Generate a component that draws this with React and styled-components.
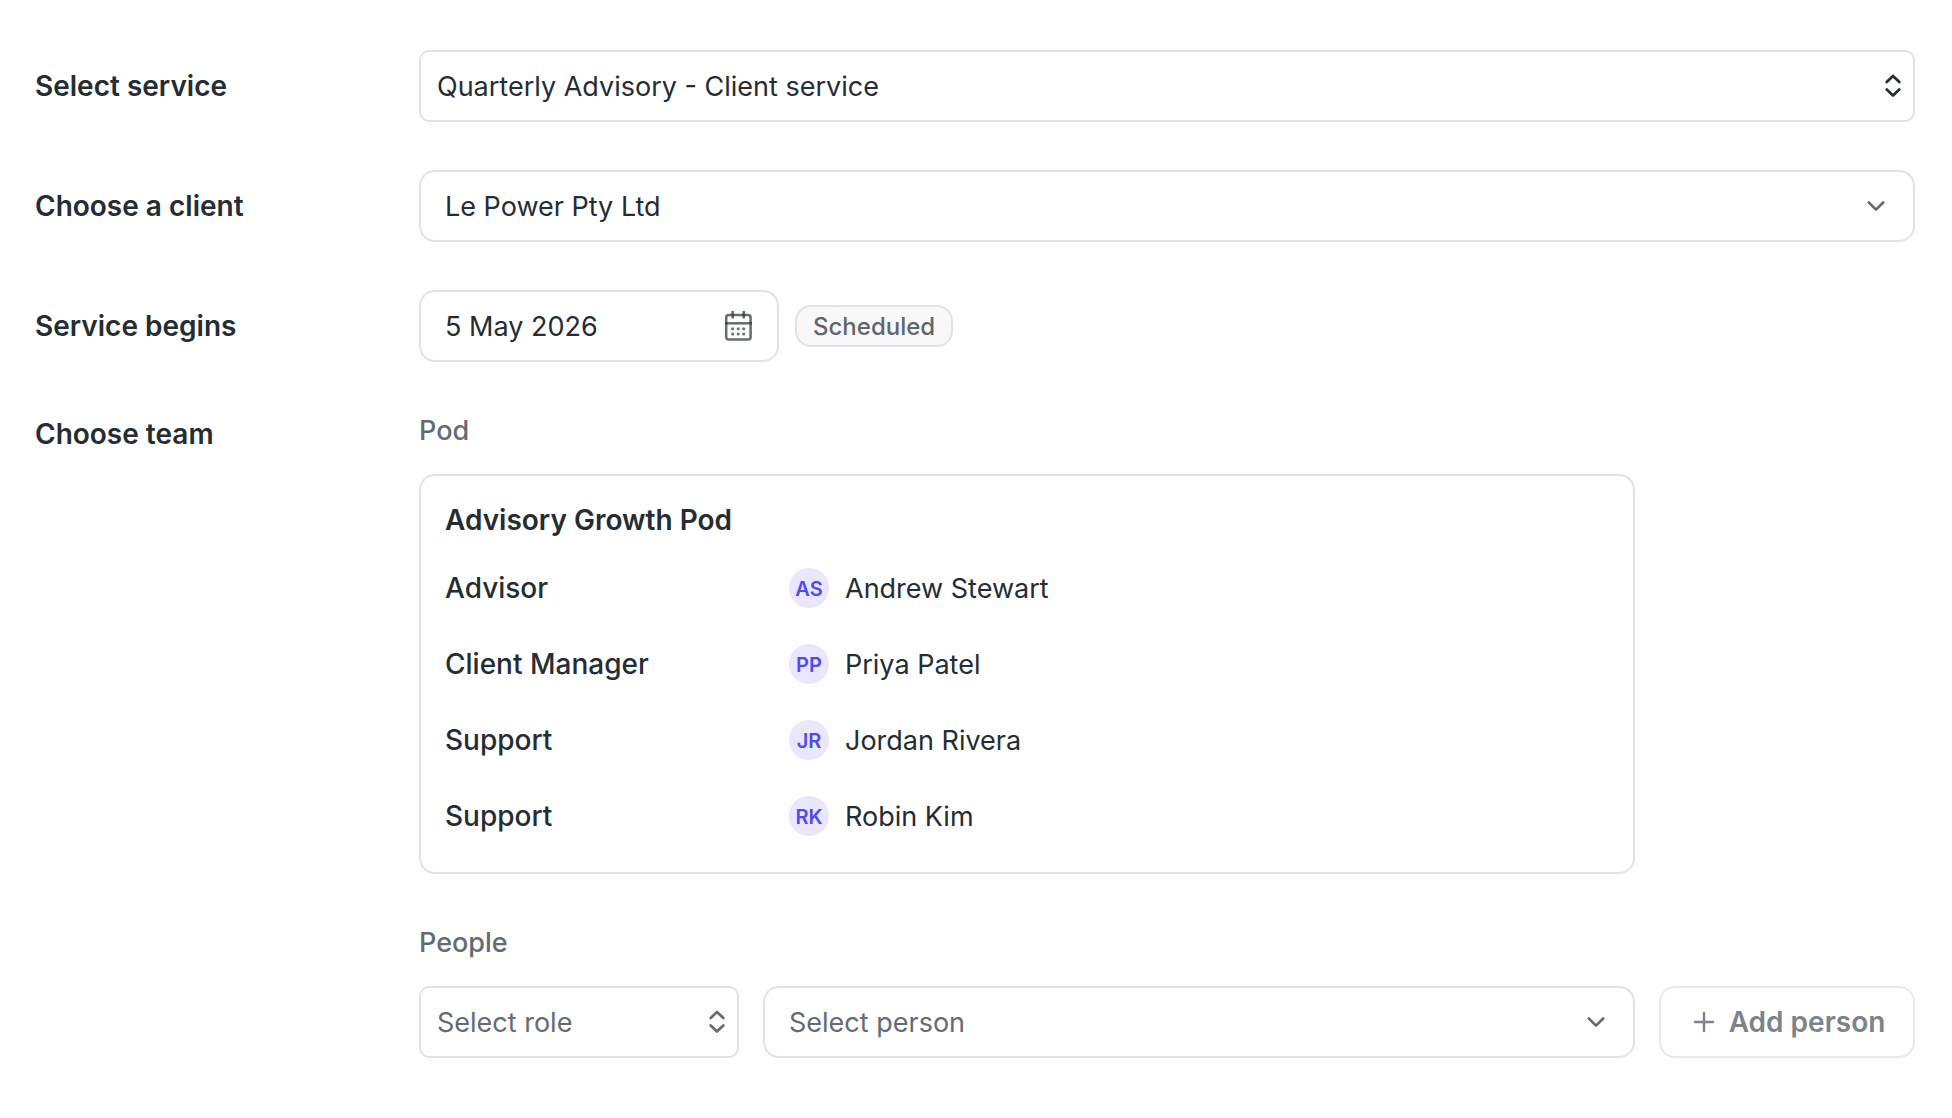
import React, { useState } from 'react'
import styled, { createGlobalStyle } from 'styled-components'

const GlobalStyle = createGlobalStyle`
  *, *::before, *::after {
    box-sizing: border-box;
  }

  body {
    margin: 0;
    background: #fefefe;
    color: #252d33;
    font-family: Inter, 'Liberation Sans', sans-serif;
    font-size: 27px;
    line-height: 36px;
  }

  button, input, select {
    font: inherit;
    color: inherit;
  }
`;

const Form = styled.form`
  display: flex;
  flex-direction: column;
  gap: 48px;
  padding: 50px 37px 60px 35px;
`;

const Row = styled.div`
  display: grid;
  grid-template-columns: 384px minmax(0, 1fr);
  align-items: ${({ $top }) => ($top ? 'start' : 'center')};
`;

const Label = styled.label`
  font-size: 28px;
  font-weight: 600;
`;

const TeamLabel = styled.h2`
  margin: 0;
  padding-top: 6px;
  font-size: 28px;
  font-weight: 600;
`;

const Field = styled.div`
  display: grid;
  align-items: center;
  min-width: 0;
  color: ${({ $muted }) => ($muted ? '#646b71' : '#252d33')};

  > * {
    grid-area: 1 / 1;
  }

  > svg {
    justify-self: end;
    margin-right: ${({ $round }) => ($round ? '27px' : '10px')};
    pointer-events: none;
  }
`;

const Select = styled.select`
  appearance: none;
  width: 100%;
  height: 72px;
  padding: 2px 56px 0 ${({ $round }) => ($round ? '24px' : '16px')};
  background: transparent;
  border: 2px solid #dfe3e8;
  border-radius: ${({ $round }) => ($round ? '16px' : '10px')};
  cursor: pointer;
`;

const DateLine = styled.div`
  display: flex;
  align-items: center;
  gap: 16px;
`;

const DateBox = styled.div`
  display: flex;
  align-items: center;
  width: 360px;
  height: 72px;
  padding: 0 24px;
  border: 2px solid #dfe3e8;
  border-radius: 16px;
`;

const DateInput = styled.input`
  flex: 1;
  min-width: 0;
  padding: 2px 0 0;
  border: none;
  outline: none;
  background: transparent;
`;

const IconButton = styled.button`
  display: flex;
  padding: 0;
  border: none;
  background: transparent;
  cursor: pointer;
`;

const Badge = styled.span`
  padding: 4px 16px 2px;
  background: #f8f8fb;
  border: 2px solid #dfe3e8;
  border-radius: 16px;
  color: #5f666c;
  font-size: 24px;
  font-weight: 500;
  line-height: 32px;
`;

const Team = styled.div`
  display: grid;
  grid-template-columns: 320px minmax(0, 1fr) 256px;
  column-gap: 24px;
`;

const GroupTitle = styled.h3`
  grid-column: 1 / -1;
  margin: 0;
  padding: ${({ $spaced }) => ($spaced ? '51px 0 25px' : '3px 0 25px')};
  color: #646b71;
  font-size: inherit;
  font-weight: 500;
`;

const PodCard = styled.section`
  grid-column: 1 / 3;
  padding: 26px 24px 36px;
  border: 2px solid #dfe3e8;
  border-radius: 16px;
`;

const PodName = styled.h4`
  margin: 0 0 30px;
  font-size: 28px;
  font-weight: 600;
`;

const Members = styled.dl`
  display: flex;
  flex-direction: column;
  gap: 36px;
  margin: 0;
`;

const Member = styled.div`
  display: grid;
  grid-template-columns: 344px 1fr;
  align-items: center;
`;

const Role = styled.dt`
  font-size: 28px;
  font-weight: 500;
`;

const Person = styled.dd`
  display: flex;
  align-items: center;
  gap: 16px;
  margin: 0;
`;

const Name = styled.span`
  padding-top: 2px;
`;

const Avatar = styled.span`
  display: flex;
  align-items: center;
  justify-content: center;
  width: 40px;
  height: 40px;
  padding-top: 2px;
  border-radius: 50%;
  background: #e9e7fe;
  color: #5149f6;
  font-size: 20px;
  font-weight: 600;
`;

const AddButton = styled.button`
  display: flex;
  align-items: center;
  justify-content: center;
  gap: 12px;
  height: 72px;
  padding: 0;
  background: transparent;
  border: 2px solid #e7e9ed;
  border-radius: 16px;
  color: #7d8388;
  font-size: 28px;
  font-weight: 600;
  white-space: nowrap;
`;

const UpDownIcon = () => (
  <svg width="24" height="28" viewBox="0 0 24 28" fill="none" stroke="currentColor" strokeWidth="2.7" strokeLinecap="round" strokeLinejoin="round" aria-hidden="true">
    <path d="M5.7 10 12 4l6.3 6M5.7 17.5 12 23.5l6.3-6" />
  </svg>
);

const ChevronIcon = () => (
  <svg width="24" height="24" viewBox="0 0 24 24" fill="none" stroke="#646b71" strokeWidth="2.6" strokeLinecap="round" strokeLinejoin="round" aria-hidden="true">
    <path d="m4.8 8.5 7.2 7.2 7.2-7.2" />
  </svg>
);

const CalendarIcon = () => (
  <svg width="30" height="32" viewBox="0 0 30 32" fill="none" stroke="#252d33" strokeOpacity="0.7" strokeWidth="2.5" aria-hidden="true">
    <rect x="3.2" y="5" width="24.4" height="24.5" rx="2.5" />
    <path d="M2 13.3h26.8" />
    <path d="M9.7 1v7.5M20.7 1v7.5" />
    <path d="M9.7 18.7h.01M15.2 18.7h.01M20.7 18.7h.01M9.7 24h.01M15.2 24h.01M20.7 24h.01" strokeWidth="3" strokeLinecap="round" />
  </svg>
);

const PlusIcon = () => (
  <svg width="28" height="28" viewBox="0 0 28 28" fill="none" stroke="currentColor" strokeWidth="2.4" strokeLinecap="round" aria-hidden="true">
    <path d="M15 5v18M6 14h18" />
  </svg>
);

const members = [
  { role: 'Advisor', initials: 'AS', name: 'Andrew Stewart' },
  { role: 'Client Manager', initials: 'PP', name: 'Priya Patel' },
  { role: 'Support', initials: 'JR', name: 'Jordan Rivera' },
  { role: 'Support', initials: 'RK', name: 'Robin Kim' },
];

const App = () => {
  const [date, setDate] = useState('5 May 2026');

  return (
    <>
      <GlobalStyle />
      <Form onSubmit={(e) => e.preventDefault()}>
        <Row>
          <Label htmlFor="service">Select service</Label>
          <Field>
            <Select id="service">
              <option>Quarterly Advisory - Client service</option>
            </Select>
            <UpDownIcon />
          </Field>
        </Row>

        <Row>
          <Label htmlFor="client">Choose a client</Label>
          <Field $round>
            <Select id="client" $round>
              <option>Le Power Pty Ltd</option>
            </Select>
            <ChevronIcon />
          </Field>
        </Row>

        <Row>
          <Label htmlFor="begins">Service begins</Label>
          <DateLine>
            <DateBox>
              <DateInput id="begins" type="text" value={date} onChange={(e) => setDate(e.target.value)} />
              <IconButton type="button" aria-label="Open calendar">
                <CalendarIcon />
              </IconButton>
            </DateBox>
            <Badge>Scheduled</Badge>
          </DateLine>
        </Row>

        <Row $top>
          <TeamLabel>Choose team</TeamLabel>
          <Team>
            <GroupTitle>Pod</GroupTitle>
            <PodCard>
              <PodName>Advisory Growth Pod</PodName>
              <Members>
                {members.map((member) => (
                  <Member key={member.initials}>
                    <Role>{member.role}</Role>
                    <Person>
                      <Avatar>{member.initials}</Avatar>
                      <Name>{member.name}</Name>
                    </Person>
                  </Member>
                ))}
              </Members>
            </PodCard>

            <GroupTitle $spaced>People</GroupTitle>
            <Field $muted>
              <Select aria-label="Role">
                <option>Select role</option>
              </Select>
              <UpDownIcon />
            </Field>
            <Field $muted $round>
              <Select aria-label="Person" $round>
                <option>Select person</option>
              </Select>
              <ChevronIcon />
            </Field>
            <AddButton type="button" disabled>
              <PlusIcon />
              Add person
            </AddButton>
          </Team>
        </Row>
      </Form>
    </>
  );
};

export default App;
